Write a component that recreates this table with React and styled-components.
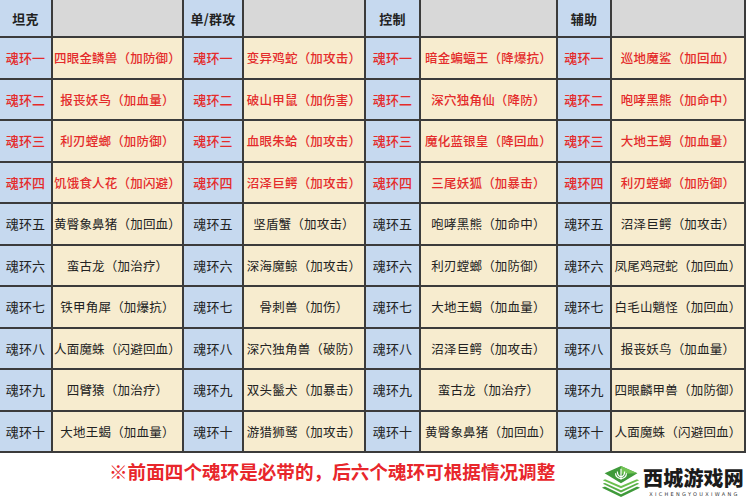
import React from "react";
import styled, { createGlobalStyle } from "styled-components";

const Global = createGlobalStyle`
  html, body { margin: 0; padding: 0; background: #ffffff; }
  body { width: 750px; height: 500px; overflow: hidden; font-family: "Noto Sans CJK SC", "Noto Sans", sans-serif; }
`;

const Page = styled.div`
  width: 750px;
  height: 500px;
  display: flex;
  flex-direction: column;
  background: #fff;
`;

const Table = styled.div`
  display: grid;
  grid-template-columns: 51px 129px 58px 120px 53px 135px 52px 132px;
  grid-template-rows: 36px repeat(10, 39.5px);
  gap: 2px;
  background: #3b3b3b;
  padding: 0 2px 2px 0;
  width: 744px;
`;

const Cell = styled.div`
  display: flex;
  align-items: center;
  justify-content: center;
  font-size: ${(p) => (p.$label ? "13px" : "12.5px")};
  font-weight: ${(p) => (p.$head ? 700 : p.$red ? 500 : 400)};
  color: ${(p) => (p.$red ? "#e42b2b" : "#222")};
  background: ${(p) =>
    p.$label ? "#c6d9ef" : p.$head ? "#d8d8d8" : "#f7eccf"};
  white-space: nowrap;
  letter-spacing: 0.2px;
`;

const HeadBlank = styled(Cell)`
  background: #d8d8d8;
`;

const Footer = styled.div`
  flex: 1;
  display: flex;
  align-items: flex-start;
  padding-left: 109px;
  padding-right: 6px;
`;

const Note = styled.div`
  color: #e8262b;
  font-size: 18.6px;
  font-weight: 700;
  line-height: 24px;
  margin-top: 6px;
`;

const Logo = styled.div`
  margin-left: auto;
  display: flex;
  align-items: flex-start;
  gap: 2px;
  margin-top: 11px;
`;

const LogoText = styled.div`
  display: flex;
  flex-direction: column;
  align-items: center;
  margin-top: 3px;
`;

const LogoName = styled.div`
  font-size: 20px;
  font-weight: 900;
  color: #1b1b1b;
  line-height: 22px;
  letter-spacing: 0.2px;
`;

const LogoSub = styled.div`
  font-family: "DejaVu Sans", sans-serif;
  font-size: 5px;
  letter-spacing: 2.3px;
  color: #333;
  line-height: 6px;
  margin-top: 2px;
  margin-left: 2px;
`;

const heads = ["坦克", "", "单/群攻", "", "控制", "", "辅助", ""];
const labels = ["魂环一", "魂环二", "魂环三", "魂环四", "魂环五", "魂环六", "魂环七", "魂环八", "魂环九", "魂环十"];
const data = [
  ["四眼金鳞兽（加防御）", "变异鸡蛇（加攻击）", "暗金蝙蝠王（降爆抗）", "巡地魔鲨（加回血）"],
  ["报丧妖鸟（加血量）", "破山甲鼠（加伤害）", "深穴独角仙（降防）", "咆哮黑熊（加命中）"],
  ["利刃螳螂（加防御）", "血眼朱蛤（加攻击）", "魔化蓝银皇（降回血）", "大地王蝎（加血量）"],
  ["饥饿食人花（加闪避）", "沼泽巨鳄（加攻击）", "三尾妖狐（加暴击）", "利刃螳螂（加防御）"],
  ["黄臀象鼻猪（加回血）", "坚盾蟹（加攻击）", "咆哮黑熊（加命中）", "沼泽巨鳄（加攻击）"],
  ["蛮古龙（加治疗）", "深海魔鲸（加攻击）", "利刃螳螂（加防御）", "凤尾鸡冠蛇（加回血）"],
  ["铁甲角犀（加爆抗）", "骨刺兽（加伤）", "大地王蝎（加血量）", "白毛山魈怪（加回血）"],
  ["人面魔蛛（闪避回血）", "深穴独角兽（破防）", "沼泽巨鳄（加攻击）", "报丧妖鸟（加血量）"],
  ["四臂猿（加治疗）", "双头鬣犬（加暴击）", "蛮古龙（加治疗）", "四眼麟甲兽（加防御）"],
  ["大地王蝎（加血量）", "游猎狮鹫（加攻击）", "黄臀象鼻猪（加回血）", "人面魔蛛（闪避回血）"],
];

function LogoIcon() {
  return (
    <svg width="40" height="35" viewBox="0 0 44 36">
      <polygon points="22,16 43,25 22,35 1,25" fill="#3f9a3a" />
      <polygon points="22,14 42,22.5 22,32 2,22.5" fill="#ffffff" />
      <polygon points="22,12 42,20.5 22,30 2,20.5" fill="#57b046" />
      <polygon points="22,10 42,18.5 22,27.5 2,18.5" fill="#ffffff" />
      <polygon points="22,8 42,16.5 22,25.5 2,16.5" fill="#6cc04f" />
      <polygon points="22,6 42,14.5 22,23 2,14.5" fill="#ffffff" />
      <polygon points="22,1 40,9 22,20 4,9" fill="#3f9a3a" />
      <polygon points="22,1 40,9 22,9.5" fill="#72c455" />
      <path d="M22 4 L22 16 M18 7 Q18 12 22 13 Q26 12 26 7 M16 9 Q16 14 22 15 Q28 14 28 9" stroke="#fff" strokeWidth="1.3" fill="none" />
    </svg>
  );
}

export default function App() {
  return (
    <Page>
      <Global />
      <Table>
        {heads.map((h, i) =>
          i % 2 === 0 ? (
            <Cell key={"h" + i} $label $head>{h}</Cell>
          ) : (
            <HeadBlank key={"h" + i} $head />
          )
        )}
        {data.map((row, r) =>
          row.map((txt, c) => (
            <React.Fragment key={r + "-" + c}>
              <Cell $label $red={r < 4}>{labels[r]}</Cell>
              <Cell $red={r < 4}>{txt}</Cell>
            </React.Fragment>
          ))
        )}
      </Table>
      <Footer>
        <Note>※前面四个魂环是必带的，后六个魂环可根据情况调整</Note>
        <Logo>
          <LogoIcon />
          <LogoText>
            <LogoName>西城游戏网</LogoName>
            <LogoSub>XICHENGYOUXIWANG</LogoSub>
          </LogoText>
        </Logo>
      </Footer>
    </Page>
  );
}
